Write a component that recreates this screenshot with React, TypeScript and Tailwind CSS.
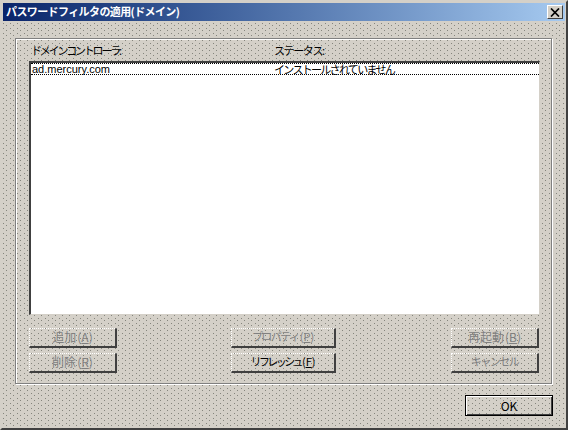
const font = "font-['Noto_Sans_CJK_JP','Liberation_Sans',sans-serif]";

function Btn({ label, mnemonic, enabled, kana, wide }: { label: string; mnemonic?: string; enabled?: boolean; kana?: string; wide?: boolean }) {
  return (
    <button
      className={`flex h-5 items-center justify-center border-t border-l border-b-2 border-r-2 border-t-white border-l-white border-b-[#404040] border-r-[#404040] border-dotted [border-bottom-style:solid] [border-right-style:solid] bg-transparent pb-[2px] leading-none ${
        wide ? "w-[105px]" : "w-[88px]"
      } ${enabled ? "text-black" : "text-[#808080]"} ${kana ?? "text-[12px]"}`}
    >
      {label}
      {mnemonic && (
        <span className="ml-[1px] tracking-normal">
          (<span className="underline">{mnemonic}</span>)
        </span>
      )}
    </button>
  );
}

export default function App() {
  const dots =
    "bg-[#d4d0c8] bg-[radial-gradient(circle_at_1.5px_1.5px,#85857d_0.5px,transparent_0.7px),radial-gradient(circle_at_4.5px_3.5px,#85857d_0.5px,transparent_0.7px)] bg-[length:7px_5px]";

  return (
    <div className={`${font} flex h-[430px] w-[568px] flex-col border-2 border-t-[#d4d0c8] border-l-[#d4d0c8] border-r-[#404040] border-b-[#404040] ${dots}`}>
      {/* title bar */}
      <div className="mx-px mt-px flex h-[18px] shrink-0 items-center justify-between bg-gradient-to-r from-[#0a246a] to-[#a6caf0] pl-[3px] pr-[2px]">
        <span className="pb-[1px] text-[11px] font-bold leading-none tracking-[-0.6px] text-white">パスワードフィルタの適用(ドメイン)</span>
        <div className="flex h-[14px] w-4 items-center justify-center border border-t-white border-l-white border-r-[#404040] border-b-[#404040] bg-[#d4d0c8]">
          <svg width="10" height="9" viewBox="0 0 10 9">
            <path d="M1 0.5 L9 8.5 M9 0.5 L1 8.5" stroke="#000" strokeWidth="1.7" fill="none" />
          </svg>
        </div>
      </div>

      {/* group frame */}
      <div className="ml-[13px] mr-[14px] mt-[17px] flex h-[346px] flex-col border border-[#808080] pl-[13px] pr-[11px] pt-[5px] shadow-[inset_1px_1px_0_#fff,1px_1px_0_#fff]">
        <div className="flex h-[12px] items-center text-[11px] leading-none text-black">
          <span className="ml-[2px] w-[243px] tracking-[-2.2px]">ドメインコントローラ:</span>
          <span className="tracking-[-1.4px]">ステータス:</span>
        </div>

        {/* list */}
        <div className="mt-[5px] h-[254px] border-t-2 border-l-2 border-t-[#404040] border-l-[#404040] border-r border-b border-r-[#d4d0c8] border-b-[#d4d0c8] bg-white">
          <div className="flex h-[12px] items-center border-y border-dotted border-black text-[11px] leading-none text-black">
            <span className="ml-[1px] w-[242px] font-['Liberation_Sans',sans-serif]">ad.mercury.com</span>
            <span className="tracking-[-1.7px]">インストールされていません</span>
          </div>
        </div>

        {/* buttons */}
        <div className="mt-[13px] grid grid-cols-[202px_220px_88px] gap-y-[5px]">
          <Btn label="追加" mnemonic="A" />
          <Btn label="プロパティ" mnemonic="P" kana="text-[11px] tracking-[-1.5px]" wide />
          <Btn label="再起動" mnemonic="B" />
          <Btn label="削除" mnemonic="R" />
          <Btn label="リフレッシュ" mnemonic="F" enabled kana="text-[11px] tracking-[-2.6px]" wide />
          <Btn label="キャンセル" kana="text-[11px] tracking-[-1.5px]" />
        </div>
      </div>

      {/* OK */}
      <div className="mr-[13px] mt-[11px] flex justify-end">
        <button className="flex h-[21px] w-[88px] items-center justify-center border border-black bg-transparent text-[12px] leading-none text-black shadow-[inset_1px_1px_0_#fff,inset_-1px_-1px_0_#404040]">
          OK
        </button>
      </div>
    </div>
  );
}
